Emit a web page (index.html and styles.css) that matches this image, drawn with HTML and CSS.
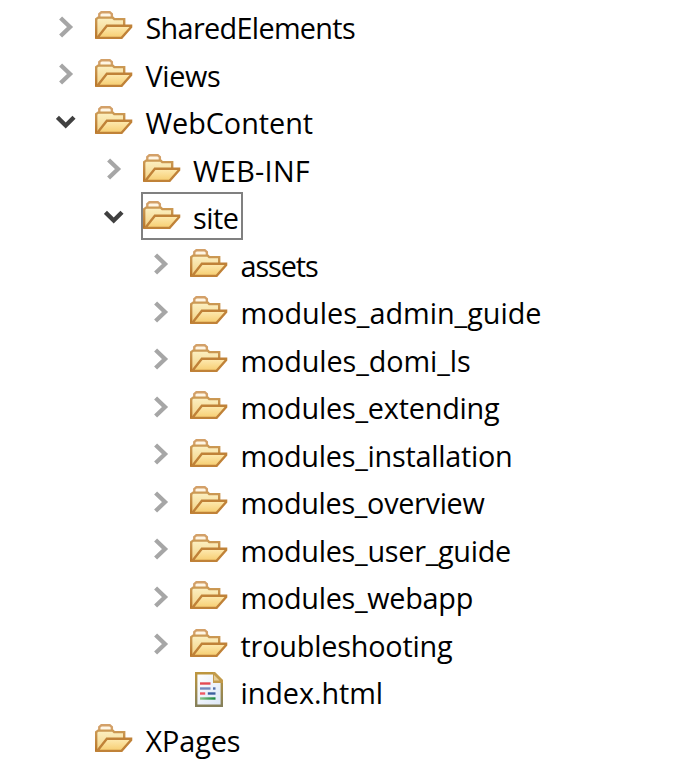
FILE: index.html
```html
<!DOCTYPE html>
<html lang="en">
<head>
<meta charset="utf-8">
<title>Project tree</title>
<link rel="stylesheet" href="styles.css">
</head>
<body>
<svg class="defs" aria-hidden="true">
  <defs>
    <linearGradient id="back" x1="0" y1="0" x2="0" y2="1"><stop offset="0" stop-color="#fcf0c2"/><stop offset="1" stop-color="#f3d285"/></linearGradient>
    <linearGradient id="front" x1="0" y1="0" x2="0" y2="1"><stop offset="0" stop-color="#feebb3"/><stop offset="1" stop-color="#f6cd70"/></linearGradient>
    <linearGradient id="edge" x1="0" y1="0" x2="0" y2="1"><stop offset="0" stop-color="#cc9a55"/><stop offset="1" stop-color="#b9772b"/></linearGradient>
    <linearGradient id="paper" x1="0" y1="0" x2="1" y2="1"><stop offset="0" stop-color="#ffffff"/><stop offset="1" stop-color="#dce7f7"/></linearGradient>
    <linearGradient id="frame" x1="0" y1="0" x2="0" y2="1"><stop offset="0" stop-color="#bd963f"/><stop offset="1" stop-color="#85805a"/></linearGradient>
    <linearGradient id="green" x1="0" y1="0" x2="1" y2="0"><stop offset="0" stop-color="#8cc68a"/><stop offset="1" stop-color="#17853b"/></linearGradient>
    <symbol id="folder" viewBox="0 0 16 12">
      <path d="M1.8 2.9V1.3L2.7.5H6.2L7.1 1.3V2.9" fill="#fff6e4" stroke="#d3a068" stroke-width="1"/>
      <path d="M.5 11.2V3.4L1.3 2.8H7.5L8.1 3.4H12.3V6.2L11 11.2Z" fill="url(#back)" stroke="url(#edge)" stroke-width="1"/>
      <path d="M1 11.3L5 6.2H15.2V6.8L11.2 11.3Z" fill="url(#front)" stroke="#c08238" stroke-width="1"/>
    </symbol>
    <symbol id="closed" viewBox="0 0 20 22"><path d="M4.6 2L14 11L4.6 20" fill="none" stroke="#a6a6a6" stroke-width="4.3"/></symbol>
    <symbol id="open" viewBox="0 0 20 22"><path d="M1.4 6.3L9.7 14.5L18 6.3" fill="none" stroke="#404040" stroke-width="4.4"/></symbol>
    <symbol id="file" viewBox="0 0 28 35">
      <path d="M1.2 1.2H19L26.8 9V33.8H1.2Z" fill="url(#paper)" stroke="url(#frame)" stroke-width="2.4"/>
      <path d="M18 0H20L28 8V11H18Z" fill="#c39b4b"/><path d="M19 3V8.5H24.5Z" fill="#e7cf98"/>
      <path d="M5 11.5H15.5" stroke="#e44953" stroke-width="2.4"/>
      <path d="M5 16.5H15.5" stroke="#7488bd" stroke-width="2.4"/><path d="M18 16.5H20.5" stroke="#5370a8" stroke-width="2.4"/>
      <path d="M5 21.5H10.2" stroke="#ef5963" stroke-width="2.4"/><path d="M12.8 21.5H20.5" stroke="#3d609e" stroke-width="2.4"/>
      <rect x="5" y="25.3" width="15.5" height="2.4" fill="url(#green)"/>
    </symbol>
  </defs>
</svg>
<main class="tree" id="tree"></main>
<script src="tree.js"></script>
</body>
</html>
```
FILE: styles.css
```css
* { box-sizing: border-box; }
body { margin: 0; background: #fff; color: #000; overflow: hidden; }
.defs { display: block; width: 0; height: 0; }
.tree { padding-top: 4px; height: 762px; overflow: hidden; font: 28.8px/47.5px "Open Sans", "Noto Sans", sans-serif; }
.row { display: flex; height: 47.5px; align-items: center; padding-left: 56px; }
.level-1 { padding-left: 103.5px; }
.level-2 { padding-left: 151px; }
.arrow { flex: none; width: 20px; height: 22px; margin: 0 17px 2px 0; }
.item { display: flex; align-items: center; height: 47.5px; padding: 0 2px; }
.selected .item { position: relative; }
.selected .item::after { content: ""; position: absolute; inset: -2px -2px 2px 0; border: 2px solid #808080; }
.icon { flex: none; width: 38px; height: 28.5px; margin: 0 12.5px 5px 0; }
.icon-file { width: 28px; height: 35px; margin: 0 18px 7px 4.5px; }
.label { white-space: pre; }
```
FILE: tree.js
```js
// level, name, label width, arrow state, icon
const rows = [
  [0, "SharedElements", 209.5, "closed", "folder"],
  [0, "Views", 75, "closed", "folder"],
  [0, "WebContent", 167.5, "open", "folder"],
  [1, "WEB-INF", 117, "closed", "folder"],
  [1, "site", 45.5, "open", "folder", true],
  [2, "assets", 77, "closed", "folder"],
  [2, "modules_admin_guide", 301, "closed", "folder"],
  [2, "modules_domi_ls", 230, "closed", "folder"],
  [2, "modules_extending", 259, "closed", "folder"],
  [2, "modules_installation", 272, "closed", "folder"],
  [2, "modules_overview", 244, "closed", "folder"],
  [2, "modules_user_guide", 270.5, "closed", "folder"],
  [2, "modules_webapp", 232.5, "closed", "folder"],
  [2, "troubleshooting", 212, "closed", "folder"],
  [2, "index.html", 142.5, "", "file"],
  [0, "XPages", 95, "", "folder"]
];
const tree = document.getElementById("tree");
for (const [level, name, width, arrow, icon, selected] of rows) {
  const row = document.createElement("div");
  row.className = `row level-${level}${selected ? " selected" : ""}`;
  row.innerHTML = `<svg class="arrow">${arrow ? `<use href="#${arrow}"/>` : ""}</svg>
    <div class="item"><svg class="icon icon-${icon}"><use href="#${icon}"/></svg><span class="label">${name}</span></div>`;
  tree.append(row);
  const label = row.querySelector(".label");
  const natural = label.getBoundingClientRect().width;
  label.style.letterSpacing = `${(width - natural) / name.length}px`;
}
```
